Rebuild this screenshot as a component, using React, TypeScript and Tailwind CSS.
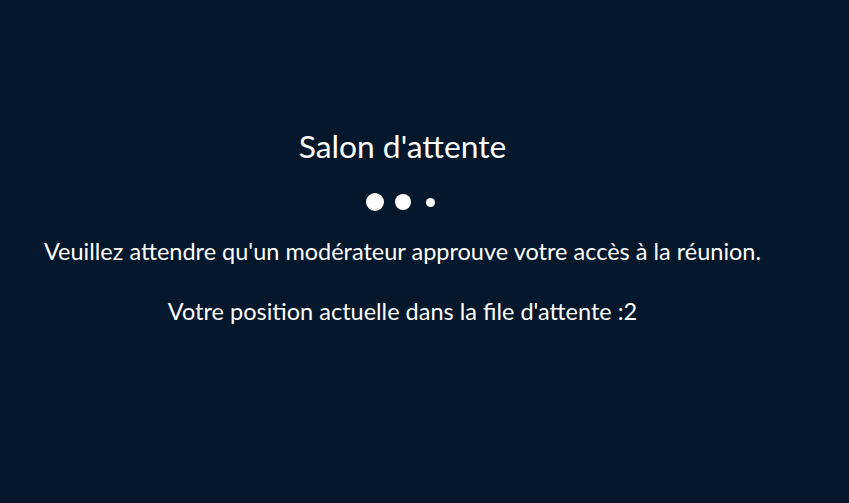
import React from "react";

const dots = [18, 16, 9];

const App = () => {
  return (
    <div className="min-h-screen w-full bg-[#05172b] text-white font-['Lato',sans-serif]">
      <div className="w-[805px] flex flex-col items-center text-center pt-[126px]">
        <h1 className="text-[31.8px] leading-[40px] font-normal">Salon d'attente</h1>
        <div className="flex items-center justify-center mt-[27px] h-[18px]">
          {dots.map((size, i) => (
            <div key={i} className="w-[27.5px] flex items-center justify-center">
              <span
                className="block rounded-full bg-white"
                style={{ width: size, height: size }}
              />
            </div>
          ))}
        </div>
        <p className="text-[23.5px] leading-[32px] mt-[24px]">
          Veuillez attendre qu'un modérateur approuve votre accès à la réunion.
        </p>
        <p className="text-[23.5px] leading-[32px] mt-[28px]">
          Votre position actuelle dans la file d'attente :2
        </p>
      </div>
    </div>
  );
};

export default App;
